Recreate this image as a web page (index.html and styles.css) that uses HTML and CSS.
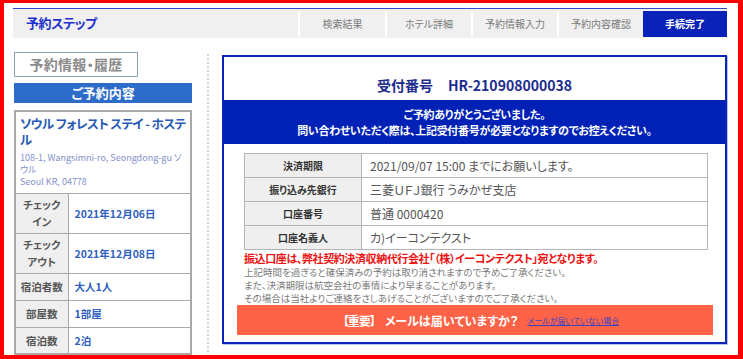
FILE: index.html
```html
<!DOCTYPE html>
<html lang="ja">
<head>
<meta charset="utf-8">
<title>手続完了</title>
<link rel="stylesheet" href="styles.css">
</head>
<body>
<div class="frame">
  <header class="steps">
    <div class="steps-title">予約ステップ</div>
    <ol class="step-list">
      <li class="step step-first">検索結果</li>
      <li class="step">ホテル詳細</li>
      <li class="step">予約情報入力</li>
      <li class="step">予約内容確認</li>
      <li class="step step-current">手続完了</li>
    </ol>
  </header>
  <div class="page">
    <aside class="sidebar">
      <div class="history-btn">予約情報・履歴</div>
      <div class="section-bar">ご予約内容</div>
      <table class="summary">
        <tr>
          <td colspan="2" class="hotel-cell">
            <div class="hotel-name">ソウル フォレスト ステイ - ホステル</div>
            <div class="hotel-addr">108-1, Wangsimni-ro, Seongdong-gu ソウル<br>Seoul KR, 04778</div>
          </td>
        </tr>
        <tr class="row-tall"><th>チェック<br>イン</th><td>2021年12月06日</td></tr>
        <tr class="row-tall"><th>チェック<br>アウト</th><td>2021年12月08日</td></tr>
        <tr class="row-short"><th>宿泊者数</th><td>大人1人</td></tr>
        <tr class="row-short"><th>部屋数</th><td>1部屋</td></tr>
        <tr class="row-short"><th>宿泊数</th><td>2泊</td></tr>
      </table>
    </aside>
    <div class="divider"></div>
    <main class="complete-box">
      <h1 class="receipt-no">受付番号<span class="receipt-gap"></span>HR-210908000038</h1>
      <div class="thanks-band">
        <p>ご予約ありがとうございました。</p>
        <p>問い合わせいただく際は、上記受付番号が必要となりますのでお控えください。</p>
      </div>
      <table class="pay-table">
        <tr><th>決済期限</th><td>2021/09/07 15:00 までにお願いします。</td></tr>
        <tr><th>振り込み先銀行</th><td>三菱ＵＦＪ銀行 うみかぜ支店</td></tr>
        <tr><th>口座番号</th><td>普通 0000420</td></tr>
        <tr><th>口座名義人</th><td>カ)イーコンテクスト</td></tr>
      </table>
      <div class="notes">
        <p class="note-alert">振込口座は、弊社契約決済収納代行会社「（株）イーコンテクスト」宛となります。</p>
        <p>上記時間を過ぎると確保済みの予約は取り消されますので予めご了承ください。</p>
        <p>また、決済期限は航空会社の事情により早まることがあります。</p>
        <p>その場合は当社よりご連絡をさしあげることがございますのでご了承ください。</p>
      </div>
      <div class="mail-band">
        <span class="mail-tag">【重要】</span>
        <span class="mail-title">メールは届いていますか？</span>
        <a class="mail-link" href="#">メールが届いていない場合</a>
      </div>
    </main>
  </div>
</div>
</body>
</html>
```

FILE: styles.css
```css
* { box-sizing: border-box; }

html, body {
  margin: 0;
  padding: 0;
  background: #ffffff;
}

body {
  font-family: "Noto Sans CJK JP", "Noto Sans", sans-serif;
  font-feature-settings: "palt";
  color: #333;
}

p { margin: 0; }

.frame {
  width: 743px;
  height: 359px;
  overflow: hidden;
  border-style: solid;
  border-color: #ff0000;
  border-width: 3px 5px 4px 4px;
  padding: 5px 11px 0 9px;
  background: #fff;
}

/* ---------- step header ---------- */
.steps {
  display: flex;
  height: 30px;
  border-top: 1px solid #3346c8;
  background: #f0f0f0;
}

.steps-title {
  flex: 1;
  padding-left: 13px;
  font-size: 13px;
  font-weight: 700;
  line-height: 28px;
  color: #1d2fcf;
  letter-spacing: -0.4px;
}

.step-list {
  display: flex;
  margin: 0;
  padding: 2px 0 1px;
  list-style: none;
}

.step {
  width: 86px;
  border-left: 2px solid #ffffff;
  font-size: 10px;
  line-height: 25px;
  text-align: center;
  color: #7a7a7a;
}

.step-first { width: 87px; }

.step-current {
  width: 84px;
  border-left: 0;
  background: #0a22b8;
  color: #ffffff;
  font-weight: 700;
}

/* ---------- page ---------- */
.page {
  display: flex;
  align-items: flex-start;
}

.sidebar {
  width: 178px;
  margin-left: 1px;
  padding-top: 14px;
}

.history-btn {
  width: 124px;
  height: 25px;
  border: 1px solid #8ea2b5;
  font-size: 14px;
  font-weight: 700;
  line-height: 23px;
  text-align: center;
  color: #8a8a8a;
  letter-spacing: 0.3px;
}

.section-bar {
  margin-top: 6px;
  height: 20px;
  background: #2e6cc9;
  color: #ffffff;
  font-size: 13px;
  font-weight: 700;
  line-height: 20px;
  text-align: center;
}

.summary {
  width: 178px;
  margin-top: 7px;
  border-collapse: collapse;
  border: 2px solid #a9a9a9;
}

.summary th,
.summary td {
  border: 1px solid #a9a9a9;
  padding: 0;
}

.summary th {
  width: 53px;
  background: #efefef;
  font-size: 10.5px;
  font-weight: 700;
  color: #555;
  line-height: 17px;
  text-align: center;
}

.summary td {
  padding-left: 6px;
  font-size: 10.5px;
  font-weight: 700;
  color: #2f5fc0;
}

.summary .hotel-cell {
  height: 82px;
  padding: 4px 2px 4px 4px;
  vertical-align: top;
}

.hotel-name {
  font-size: 12.5px;
  font-weight: 700;
  line-height: 16px;
  color: #2a5ab5;
  letter-spacing: -0.6px;
}

.hotel-addr {
  margin-top: 4px;
  font-size: 9px;
  font-weight: 400;
  line-height: 12px;
  color: #8390cc;
}

.row-tall th, .row-tall td { height: 40px; }
.row-short th, .row-short td { height: 27px; }

.divider {
  width: 2px;
  height: 310px;
  margin: 16px 0 0 15px;
  border-left: 2px dotted #d4d4d4;
}

/* ---------- completion box ---------- */
.complete-box {
  width: 505px;
  height: 289px;
  margin: 17px 0 0 13px;
  border: 2px solid #0c25b8;
  box-shadow: 1px 1px 0 #b8c2ee;
}

.receipt-no {
  margin: 0;
  padding-top: 18px;
  height: 43px;
  font-size: 14px;
  font-weight: 700;
  line-height: 20px;
  text-align: center;
  color: #1c2b8e;
}

.receipt-gap {
  display: inline-block;
  width: 15px;
}

.thanks-band {
  height: 44px;
  padding-top: 6px;
  background: #0021b6;
  color: #ffffff;
  font-size: 11px;
  font-weight: 700;
  line-height: 16px;
  text-align: center;
  letter-spacing: -0.3px;
}

.pay-table {
  width: 464px;
  margin: 9px 0 0 20px;
  border-collapse: collapse;
}

.pay-table th,
.pay-table td {
  height: 24px;
  border: 1px solid #b5b5b5;
  padding: 0;
}

.pay-table th {
  width: 117px;
  background: #efefef;
  font-size: 10px;
  font-weight: 700;
  color: #333;
  text-align: center;
}

.pay-table td {
  padding-left: 8px;
  font-size: 12px;
  color: #555;
}

.notes {
  margin: 1px 0 0 20px;
  font-size: 9.5px;
  line-height: 13px;
  color: #7a7a7a;
}

.note-alert {
  font-size: 11px;
  font-weight: 700;
  line-height: 15px;
  color: #ee1111;
  letter-spacing: -0.4px;
}

.mail-band {
  display: flex;
  align-items: center;
  justify-content: center;
  height: 30px;
  margin: 0 12px 0 13px;
  padding-left: 12px;
  background: #ff6347;
}

.mail-tag {
  font-size: 12px;
  font-weight: 700;
  color: #ffffff;
  letter-spacing: -1px;
}

.mail-title {
  margin-left: 10px;
  font-size: 12px;
  font-weight: 700;
  color: #ffffff;
}

.mail-link {
  margin-left: 9px;
  font-size: 8px;
  color: #3a46c0;
  text-decoration: underline;
}
```
